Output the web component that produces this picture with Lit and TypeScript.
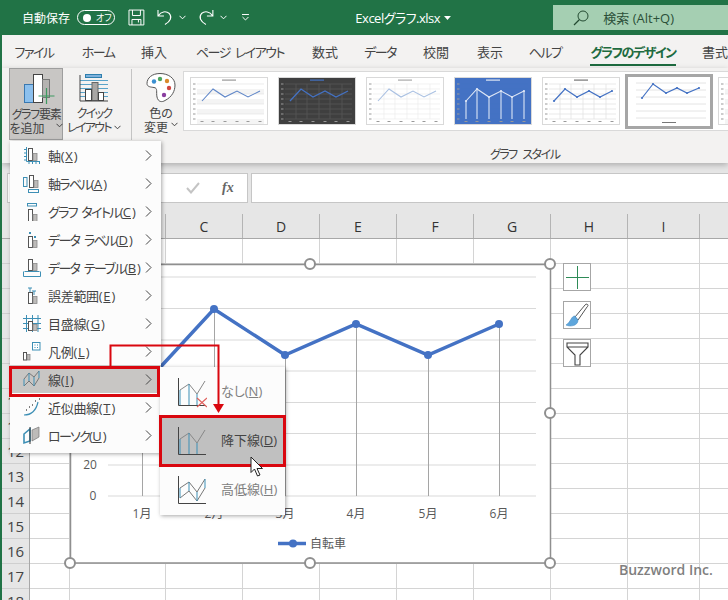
import { css, html, svg, LitElement } from 'lit'
import { customElement, property } from 'lit/decorators.js'

type Thumb = {
  bg: string
  line: string
  grid: string
  lineWidth: number
  vertical?: boolean
  drop?: boolean
  dots?: boolean
  band?: boolean
  title: string
}

const THUMBS: Thumb[] = [
  { bg: '#fff', line: '#5f86c8', grid: '#e4e4e4', lineWidth: 1.1, band: true, title: '#999' },
  { bg: '#3f3f3f', line: '#4472c4', grid: '#5a5a5a', lineWidth: 1.3, vertical: true, title: '#4472c4' },
  { bg: '#fff', line: '#a9c0e2', grid: '#ececec', lineWidth: 1.1, vertical: true, title: '#aaa' },
  { bg: '#4472c4', line: '#dfe7f5', grid: '#4472c4', lineWidth: 1.1, drop: true, dots: true, title: '#dfe7f5' },
  { bg: '#fff', line: '#4472c4', grid: '#e0e0e0', lineWidth: 1.2, vertical: true, dots: true, title: '#777' },
]

const THUMB_X = [12, 23, 35, 47, 58, 70]
const THUMB_Y = [24, 12, 20, 14, 20, 14]

@customElement('chart-thumb')
export class ChartThumb extends LitElement {
  @property({ type: Number })
  index = 0

  render() {
    const t = THUMBS[this.index]
    const pts = THUMB_X.map((x, i) => `${x},${THUMB_Y[i]}`).join(' ')
    const rows = [7, 12, 17, 22, 27, 32, 37, 42]
    return html`
      <svg width="78" height="48" viewBox="0 0 78 48">
        <rect x="0.5" y="0.5" width="77" height="47" fill=${t.bg} stroke="#d9d9d9" />
        <rect x="32" y="2.5" width="14" height="1.2" fill=${t.title} />
        ${rows.map((y) =>
          t.band && y % 2 === 0
            ? svg`<rect x="7" y=${y} width="67" height="5" fill="#f4f4f4" />`
            : svg`<line x1="7" x2="74" y1=${y} y2=${y} stroke=${t.grid} stroke-width="0.7" />`
        )}
        ${t.vertical
          ? [18, 29, 41, 52, 64].map(
              (x) =>
                svg`<line x1=${x} x2=${x} y1="7" y2="42" stroke=${t.grid} stroke-width="0.7" />`
            )
          : ''}
        ${t.drop
          ? THUMB_X.map(
              (x, i) =>
                svg`<line x1=${x} x2=${x} y1=${THUMB_Y[i]} y2="42" stroke="#cfdcf2" stroke-width="1.2" />`
            )
          : ''}
        <polyline points=${pts} fill="none" stroke=${t.line} stroke-width=${t.lineWidth} />
        ${t.dots
          ? THUMB_X.map(
              (x, i) => svg`<circle cx=${x} cy=${THUMB_Y[i]} r="1.1" fill=${t.line} />`
            )
          : ''}
        ${rows.map(
          (y) => svg`<rect x="3" y=${y - 0.5} width="2.5" height="1" fill="#999" />`
        )}
        ${THUMB_X.map((x) => svg`<rect x=${x - 1.5} y="44" width="3" height="1" fill="#999" />`)}
      </svg>
    `
  }

  static styles = css`
    :host {
      display: block;
      width: 78px;
      height: 48px;
    }
    svg {
      display: block;
    }
  `
}

const DARK = '#555'
const BLUE = '#3d8fb5'
const GREY = '#bdbbb9'

// two little bars that nearly every chart element icon shares
const bars = (x: number, y: number, h = 12) => svg`
  <rect x=${x + 0.5} y=${y + 0.5} width="4" height=${h} fill="#fff" stroke=${DARK} />
  <rect x=${x + 5} y=${y + h - 6.5} width="4" height="7" fill=${GREY} stroke="#8a8a8a" stroke-width="0.8" />
`

const ICONS = [
  // 軸
  svg`${bars(5, 2)}
    <path d="M3.5 1V15.5H17M1 3.5H3.5M1 7H3.5M1 10.5H3.5M1 14H3.5M6 15.5V18M9.5 15.5V18M13 15.5V18M16.5 15.5V18" fill="none" stroke=${BLUE} />`,
  // 軸ラベル
  svg`<rect x="0.5" y="3.5" width="3.5" height="9" fill="none" stroke=${BLUE} />
    ${bars(6, 1)}
    <rect x="5.5" y="15.5" width="10" height="3" fill="none" stroke=${BLUE} />`,
  // グラフ タイトル
  svg`<rect x="4.5" y="1.5" width="9" height="2.5" fill="none" stroke=${BLUE} />${bars(5, 7)}`,
  // データ ラベル
  svg`<rect x="6" y="2" width="2" height="2" fill=${BLUE} /><rect x="11" y="6" width="2" height="2" fill=${BLUE} />
    <rect x="5.5" y="6.5" width="4" height="11" fill="#fff" stroke=${DARK} />
    <rect x="10" y="10.5" width="4" height="7" fill=${GREY} stroke="#8a8a8a" stroke-width="0.8" />`,
  // データ テーブル
  svg`${bars(5, 1, 11)}
    <path d="M1.5 13.5H16.5M0.5 13.5V18.5H17.5V13.5M0.5 18.5" fill="none" stroke=${BLUE} />`,
  // 誤差範囲
  svg`<path d="M5 2H9M7 2V6M9 5H13M11 5V9" stroke=${BLUE} fill="none" />
    <rect x="5.5" y="6.5" width="4" height="11" fill="#fff" stroke=${DARK} />
    <rect x="10" y="10.5" width="4" height="7" fill=${GREY} stroke="#8a8a8a" stroke-width="0.8" />`,
  // 目盛線
  svg`<path d="M0 4.5H18M0 9.5H18M0 14.5H18M3.5 1V18M9.5 1V18M15 1V18" fill="none" stroke=${BLUE} />
    <rect x="5.5" y="7.5" width="4" height="9" fill="#fff" stroke=${DARK} />
    <rect x="10" y="10.5" width="4" height="6" fill=${GREY} stroke="#8a8a8a" stroke-width="0.8" />`,
  // 凡例
  svg`<rect x="9.5" y="0.5" width="7.5" height="7.5" fill="#fff" stroke=${BLUE} />
    <path d="M11.5 3H12.5M14 3H15M11.5 5.5H12.5M14 5.5H15" stroke=${BLUE} />
    <rect x="0.5" y="10.5" width="3" height="7.5" fill="#fff" stroke=${DARK} />
    <rect x="4" y="12.5" width="3" height="5.5" fill=${GREY} stroke="#8a8a8a" stroke-width="0.8" />`,
  // 線
  svg`<path d="M1 9L6 3L11 7L16 1M1 16L6 11L11 16L16 8" fill="none" stroke="#777" />
    <path d="M1 9V16M6 3V11M11 7V16M16 1V8" fill="none" stroke=${BLUE} />`,
  // 近似曲線
  svg`<path d="M1 17C8 17 13 13 15 4" fill="none" stroke=${BLUE} stroke-width="1.2" />
    <path d="M3 12H4M6 9H7M9 7H10M12 3H13M16 1H17" stroke="#555" stroke-width="1.6" />`,
  // ローソク
  svg`<path d="M1 8L7 3V15L1 17Z" fill="none" stroke=${BLUE} stroke-width="1.6" />
    <path d="M9 4L16 1V11L9 15Z" fill=${GREY} stroke="#777" stroke-width="0.7" />
    <path d="M7 1V18" stroke="#333" />`,
]

const LINE_TOP = 'M3 12L12 6L20 16L28 3'
const LINE_LOW = 'M3 22L12 15L20 25L28 12'

const subIcon = (body: unknown) => html`
  <svg class="sub-icon" width="30" height="30" viewBox="0 0 30 30">
    <path d="M1.5 0V27.5H29" fill="none" stroke="#444" />
    ${body}
  </svg>
`

const MENU = [
  ['軸(', 'X', ')'],
  ['軸ラベル(', 'A', ')'],
  ['グラフ タイトル(', 'C', ')'],
  ['データ ラベル(', 'D', ')'],
  ['データ テーブル(', 'B', ')'],
  ['誤差範囲(', 'E', ')'],
  ['目盛線(', 'G', ')'],
  ['凡例(', 'L', ')'],
  ['線(', 'I', ')'],
  ['近似曲線(', 'T', ')'],
  ['ローソク(', 'U', ')'],
]

const TABS = [
  ['ファイル', 64],
  ['ホーム', 64],
  ['挿入', 48],
  ['ページ レイアウト', 124],
  ['数式', 46],
  ['データ', 64],
  ['校閲', 48],
  ['表示', 60],
  ['ヘルプ', 50],
  ['グラフのデザイン', 126],
  ['書式', 38],
] as const

const COLS = [
  ['A', 40],
  ['B', 96],
  ['C', 77],
  ['D', 77],
  ['E', 77],
  ['F', 77],
  ['G', 77],
  ['H', 77],
  ['I', 72],
  ['', 29],
] as const

const ROWS = Array.from({ length: 15 }, (_, i) => i + 4)

const GRID_Y = [277, 308.5, 340, 371, 402.5, 433.5, 465, 496]
const PX = [142, 214, 285, 356, 428, 499]
const PY = [387, 309, 355, 324, 355, 324]
const HANDLES = [
  [70, 264],
  [310, 264],
  [550, 264],
  [550, 413],
  [70, 563],
  [310, 563],
  [550, 563],
]

const hasKana = (s: string) => /[\u30a0-\u30ff]/.test(s)

const chevron = html`<svg class="chev" width="7" height="5" viewBox="0 0 7 5">
  <path d="M0.5 0.8L3.5 3.8L6.5 0.8" fill="none" stroke="currentColor" />
</svg>`

@customElement('app-root')
export class AppRoot extends LitElement {
  renderTitleBar() {
    return html`
      <div class="title">
        <span class="autosave">自動保存</span>
        <span class="toggle"><i></i><b>オフ</b></span>
        <svg class="save" width="17" height="17" viewBox="0 0 17 17">
          <path
            d="M1 1H16V16H1ZM4.5 1V6.5H12.5V1M4 16V10.5H13V16M10.5 10.5V13.5"
            fill="none"
            stroke="#fff"
          />
        </svg>
        <svg class="undo" width="16" height="17" viewBox="0 0 16 17">
          <path
            d="M1 1V7H7M1.5 6.5C4 2.5 9 1.5 12.5 4.5C15.5 8 13.5 12.5 8 15.5"
            fill="none"
            stroke="#fff"
            stroke-width="1.1"
          />
        </svg>
        <span class="qat-chev">${chevron}</span>
        <svg class="redo" width="16" height="17" viewBox="0 0 16 17">
          <path
            d="M15 1V7H9M14.5 6.5C12 2.5 7 1.5 3.5 4.5C0.5 8 2.5 12.5 8 15.5"
            fill="none"
            stroke="#fff"
            stroke-width="1.1"
          />
        </svg>
        <span class="qat-chev">${chevron}</span>
        <svg class="custom" width="7" height="7" viewBox="0 0 7 7">
          <path d="M0 0.5H7M0.5 3L3.5 6L6.5 3" fill="none" stroke="#fff" />
        </svg>
        <span class="filename">Excelグラフ.xlsx</span>
        <svg class="caret" width="7" height="4" viewBox="0 0 7 4">
          <path d="M0 0H7L3.5 4Z" fill="#fff" />
        </svg>
        <div class="search">
          <svg width="16" height="16" viewBox="0 0 16 16">
            <circle cx="10" cy="6" r="5" fill="none" stroke="#234a31" />
            <path d="M6.5 9.5L1 15" stroke="#234a31" stroke-width="1.2" />
          </svg>
          <span>検索 (Alt+Q)</span>
        </div>
      </div>
    `
  }

  renderTabs() {
    return html`
      <div class="tabs">
        ${TABS.map(([name, w], i) => {
          const cls = `tab${i === 9 ? ' active' : ''}${hasKana(name) ? ' kana' : ''}`
          return html`<span class=${cls} style="width:${w}px">${name}</span>`
        })}
      </div>
    `
  }

  renderRibbon() {
    return html`
      <div class="ribbon">
        <div class="big pressed">
          <svg width="32" height="32" viewBox="0 0 32 32">
            <rect x="0.5" y="11.5" width="9" height="18" fill="#8cc0ee" stroke="#3a78b0" />
            <rect x="9.5" y="1.5" width="9" height="28" fill="#fff" stroke="#444" />
            <rect x="18.5" y="6.5" width="7" height="18" fill="#b5b3b1" stroke="#777" />
            <path d="M22.5 15V31M14.5 23H30.5" stroke="#3d9a60" stroke-width="1.2" />
          </svg>
          <span class="tight">グラフ要素</span>
          <span>を追加 ${chevron}</span>
        </div>
        <div class="big quick">
          <svg width="30" height="30" viewBox="0 0 30 30">
            <rect x="6.5" y="1.5" width="16" height="3" fill="#7fb2dc" stroke="#2e7fae" />
            <path d="M1 7.5H29M1 11.5H29M1 15.5H29M1 19.5H29M1 23.5H29" stroke="#5aa3c9" />
            <rect x="13" y="9.5" width="6" height="18" fill="#a8a6a4" stroke="#666" />
            <rect x="6.5" y="16.5" width="6" height="11" fill="#fff" stroke="#444" />
            <rect x="19.5" y="19.5" width="5" height="8" fill="#fff" stroke="#444" />
            <path d="M1 2V28H29" fill="none" stroke="#444" />
          </svg>
          <span class="tighter">クイック</span>
          <span><span class="tighter">レイアウト</span> ${chevron}</span>
        </div>
        <div class="vsep"></div>
        <div class="big colors">
          <svg width="30" height="32" viewBox="0 0 30 32">
            <path
              d="M14 1.5C6 1.5 1 6 1 11.5C1 15 5 15 8 15.5C12 16 10 20 11 25C12 30 16 30.5 19 28.5C26 25 29 19 29 13C29 6 22 1.5 14 1.5Z"
              fill="#fff"
              stroke="#555"
            />
            <circle cx="8" cy="9.5" r="2.2" fill="#3a8fd0" />
            <circle cx="14" cy="7" r="2.2" fill="#4ba55d" />
            <circle cx="21" cy="9" r="2.2" fill="#d98a2b" />
            <circle cx="23" cy="16" r="2.2" fill="#d0453f" />
            <circle cx="18" cy="23" r="2.2" fill="#8a3fa0" />
          </svg>
          <span>色の</span>
          <span>変更 ${chevron}</span>
        </div>
        <div class="gallery-wrap">
          <div class="gallery">
            ${THUMBS.map((_, i) => html`<chart-thumb .index=${i}></chart-thumb>`)}
            <div class="picked">
              <svg width="82" height="49" viewBox="0 0 82 49">
                ${[6, 13, 20, 27, 34, 41].map(
                  (y) => svg`<line x1="8" x2="78" y1=${y} y2=${y} stroke="#ddd" stroke-width="0.8" />`
                )}
                <polyline
                  points="14,21 25,7 38,16 49,11 59,16 71,11"
                  fill="none"
                  stroke="#4472c4"
                  stroke-width="1.2"
                />
                ${[
                  [14, 21],
                  [25, 7],
                  [38, 16],
                  [49, 11],
                  [59, 16],
                  [71, 11],
                ].map(([x, y]) => svg`<circle cx=${x} cy=${y} r="1.1" fill="#4472c4" />`)}
                <rect x="34" y="45" width="14" height="1" fill="#777" />
              </svg>
            </div>
            <chart-thumb class="cut" .index=${0}></chart-thumb>
          </div>
          <div class="group-label">グラフ スタイル</div>
        </div>
      </div>
    `
  }

  renderFormula() {
    return html`
      <div class="formula">
        <div class="fbox name"></div>
        <div class="fbox funcs">
          <svg width="14" height="12" viewBox="0 0 14 12">
            <path d="M1 6L5 10.5L13 1" fill="none" stroke="#c4c4c4" stroke-width="2" />
          </svg>
          <span class="fx">fx</span>
        </div>
        <div class="fbox input"></div>
      </div>
    `
  }

  renderSheet() {
    return html`
      <div class="sheet">
        <div class="corner"></div>
        <div class="colheads">
          ${COLS.map(
            ([name, w]) => html`<div class="colhead" style="width:${w}px">${name}</div>`
          )}
        </div>
        <div class="rowheads">
          ${ROWS.map((n) => html`<div class="rowhead">${n}</div>`)}
        </div>
        <div class="cells">
          ${ROWS.map(
            () => html`<div class="row">
              ${COLS.map(([, w]) => html`<div class="cell" style="width:${w}px"></div>`)}
            </div>`
          )}
        </div>
      </div>
    `
  }

  renderChart() {
    const pts = PX.map((x, i) => `${x},${PY[i]}`).join(' ')
    const months = ['1月', '2月', '3月', '4月', '5月', '6月']
    return html`
      <svg class="chart" width="500" height="320" viewBox="60 254 500 320">
        <rect x="70.5" y="264.5" width="480" height="298.5" fill="#fff" stroke="#8f8f8f" stroke-width="1.5" />
        ${GRID_Y.map(
          (y) => svg`<line x1="108" x2="536" y1=${y} y2=${y} stroke="#d9d9d9" />`
        )}
        ${PX.map(
          (x, i) =>
            svg`<line x1=${x + 0.5} x2=${x + 0.5} y1=${PY[i]} y2="496" stroke="#a5a5a5" />`
        )}
        <polyline points=${pts} fill="none" stroke="#4472c4" stroke-width="3.5" />
        ${PX.map((x, i) => svg`<circle cx=${x} cy=${PY[i]} r="4" fill="#4472c4" />`)}
        <text class="axis" x="90" y="469" text-anchor="middle">20</text>
        <text class="axis" x="93" y="500" text-anchor="middle">0</text>
        ${months.map(
          (m, i) => svg`<text class="axis" x=${PX[i]} y="518" text-anchor="middle">${m}</text>`
        )}
        <line x1="278" x2="306" y1="543.5" y2="543.5" stroke="#4472c4" stroke-width="3.5" />
        <circle cx="293" cy="543.5" r="4" fill="#4472c4" />
        <text class="axis" x="310" y="548">自転車</text>
        ${HANDLES.map(
          ([x, y]) =>
            svg`<circle cx=${x} cy=${y} r="5" fill="#fff" stroke="#8f8f8f" stroke-width="2" />`
        )}
      </svg>
    `
  }

  renderSideButtons() {
    return html`
      <div class="side">
        <div class="side-btn">
          <svg width="24" height="24" viewBox="0 0 24 24">
            <path d="M12.5 1V24M1 12.5H24" stroke="#2e8b57" />
          </svg>
        </div>
        <div class="side-btn">
          <svg width="26" height="26" viewBox="0 0 26 26">
            <path d="M11 15L21 3C22 1.5 24 2 24 3.5C24 4 23.5 4.5 23 5L14 18Z" fill="#fff" stroke="#555" />
            <path
              d="M11 14C7 14 7 20 2 23C6 25 14 24 14 18Z"
              fill="#5ea6dc"
              stroke="#4a8fc4"
              stroke-width="0.6"
            />
          </svg>
        </div>
        <div class="side-btn">
          <svg width="24" height="26" viewBox="0 0 24 26">
            <path d="M2 3H23V7L15 15V25H10V15L2 7ZM2 7H23" fill="#fff" stroke="#444" stroke-width="1.1" />
          </svg>
        </div>
      </div>
    `
  }

  renderMenu() {
    return html`
      <div class="menu">
        ${MENU.map(
          ([a, k, b], i) => html`
            <div class=${i === 8 ? 'item hot' : 'item'}>
              <svg class="icon" width="18" height="19" viewBox="0 0 18 19">${ICONS[i]}</svg>
              <span class=${hasKana(a) ? 'label kana' : 'label'}>${a}<u>${k}</u>${b}</span>
              <svg class="more" width="7" height="11" viewBox="0 0 7 11">
                <path d="M1 0.5L6 5.5L1 10.5" fill="none" stroke="#444" />
              </svg>
            </div>
          `
        )}
      </div>
    `
  }

  renderSubmenu() {
    return html`
      <div class="submenu">
        <div class="sub">
          ${subIcon(svg`
            <path d=${LINE_TOP} fill="none" stroke="#888" />
            <path d="M3 12V27M12 6V27M20 16V27" stroke=${BLUE} />
            <path d="M20 20L30 29M30 20L20 29" stroke="#e0605c" stroke-width="1.2" />
          `)}
          <span class="sub-label dim">なし(<u>N</u>)</span>
        </div>
        <div class="sub hot">
          ${subIcon(svg`
            <path d=${LINE_TOP} fill="none" stroke="#888" />
            <path d="M3 12V27M12 6V27M20 16V27" stroke=${BLUE} />
          `)}
          <span class="sub-label">降下線(<u>D</u>)</span>
        </div>
        <div class="sub">
          ${subIcon(svg`
            <path d=${LINE_TOP} fill="none" stroke="#777" />
            <path d=${LINE_LOW} fill="none" stroke="#777" />
            <path d="M3 12V22M12 6V15M20 16V25M28 3V12" stroke=${BLUE} />
          `)}
          <span class="sub-label dim">高低線(<u>H</u>)</span>
        </div>
      </div>
    `
  }

  renderMarks() {
    return html`
      <div class="mark-rect line-row"></div>
      <div class="mark-rect drop-row"></div>
      <svg class="arrow" width="130" height="80" viewBox="100 340 130 80">
        <path d="M110.5 366V345.5H218.5V405" fill="none" stroke="#d9070f" stroke-width="2" />
        <path d="M213 404H224L218.5 413Z" fill="#d9070f" />
      </svg>
      <svg class="cursor" width="14" height="22" viewBox="0 0 14 22">
        <path
          d="M1 1V16.5L4.5 13L7.5 20L10 19L7 12.5H12.5Z"
          fill="#fff"
          stroke="#222"
          stroke-linejoin="round"
        />
      </svg>
      <div class="watermark">Buzzword Inc.</div>
    `
  }

  render() {
    return html`
      ${this.renderTitleBar()} ${this.renderTabs()} ${this.renderRibbon()} ${this.renderFormula()}
      ${this.renderSheet()} ${this.renderChart()} ${this.renderSideButtons()} ${this.renderMenu()}
      ${this.renderSubmenu()} ${this.renderMarks()}
    `
  }

  static styles = css`
    :host {
      display: block;
      position: relative;
      width: 728px;
      height: 600px;
      overflow: hidden;
      background: #fff;
      font-family: 'Open Sans', 'Noto Sans CJK JP', sans-serif;
      font-feature-settings: 'palt';
      color: #444;
      border-left: 2px solid #217346;
      box-sizing: border-box;
    }
    .title {
      display: flex;
      align-items: center;
      height: 35px;
      background: #217346;
      margin-left: -2px;
      color: #fff;
      font-size: 13px;
    }
    .autosave {
      flex: none;
      margin-left: 22px;
      width: 50px;
      font-size: 12px;
      white-space: nowrap;
    }
    .toggle {
      flex: none;
      display: flex;
      align-items: center;
      box-sizing: border-box;
      width: 38px;
      height: 15px;
      margin-left: 5px;
      border: 1px solid #fff;
      border-radius: 8px;
      padding-left: 5px;
    }
    .toggle i {
      width: 8px;
      height: 8px;
      border-radius: 50%;
      background: #fff;
    }
    .toggle b {
      font-size: 9px;
      font-weight: 400;
      margin-left: 5px;
    }
    .save {
      margin-left: 13px;
    }
    .undo {
      margin-left: 12px;
    }
    .redo {
      margin-left: 9px;
    }
    .qat-chev {
      display: flex;
      margin-left: 6px;
      width: 10px;
    }
    .custom {
      margin-left: 13px;
    }
    .filename {
      flex: none;
      margin-left: 106px;
      width: 86px;
      white-space: nowrap;
      font-size: 13px;
      letter-spacing: -0.5px;
    }
    .caret {
      margin-left: 3px;
    }
    .search {
      display: flex;
      align-items: center;
      box-sizing: border-box;
      width: 176px;
      height: 25px;
      margin-left: 102px;
      padding-left: 20px;
      background: #a5cfb2;
      color: #2b4f38;
      font-size: 13px;
      white-space: nowrap;
    }
    .search span {
      margin-left: 14px;
    }
    .tabs {
      display: flex;
      align-items: center;
      height: 33px;
      background: #f3f2f1;
      white-space: nowrap;
      overflow: hidden;
    }
    .tab {
      flex: none;
      text-align: center;
      font-size: 13px;
      position: relative;
    }
    .tab.kana {
      letter-spacing: -1.5px;
      word-spacing: 3px;
    }
    .tab.active {
      color: #1e6b3f;
      font-weight: 700;
    }
    .tab.active::after {
      content: '';
      position: absolute;
      left: 20px;
      right: 20px;
      bottom: -5px;
      height: 2px;
      background: #1e6b3f;
    }
    .ribbon {
      position: relative;
      display: flex;
      height: 95px;
      background: #f3f2f1;
      box-shadow: 0 2px 6px rgba(0, 0, 0, 0.25);
    }
    .big {
      display: flex;
      flex-direction: column;
      align-items: center;
      box-sizing: border-box;
      height: 72px;
      font-size: 12px;
      line-height: 14px;
      white-space: nowrap;
    }
    .big svg:first-child {
      margin-bottom: 3px;
    }
    .tight {
      letter-spacing: -1.3px;
    }
    .tighter {
      letter-spacing: -1.7px;
    }
    .chev {
      vertical-align: 2px;
    }
    .pressed {
      width: 54px;
      margin-left: 7px;
      padding-top: 4px;
      background: #c8c6c4;
      border: 1px solid #9e9e9e;
    }
    .pressed svg:first-child {
      margin-left: 8px;
    }
    .quick {
      width: 62px;
      padding-top: 5px;
    }
    .quick svg:first-child {
      margin-bottom: 4px;
    }
    .vsep {
      flex: none;
      width: 1px;
      height: 71px;
      margin: 1px 0 0 6px;
      background: #c4c4c4;
    }
    .colors {
      flex: none;
      width: 44px;
      margin-left: 7px;
      padding-top: 4px;
    }
    .gallery-wrap {
      flex: none;
      width: 545px;
    }
    .gallery {
      display: flex;
      align-items: center;
      gap: 10px;
      box-sizing: border-box;
      height: 60px;
      margin-top: 3px;
      padding-left: 6px;
      background: #fff;
      border: 1px solid #d9d9d9;
      border-right: none;
      overflow: hidden;
    }
    .picked {
      flex: none;
      box-sizing: border-box;
      width: 88px;
      height: 55px;
      margin-left: -5px;
      border: 3px solid #a6a6a6;
      background: #fff;
    }
    .picked svg {
      display: block;
    }
    .cut {
      flex: none;
      margin-left: -5px;
    }
    chart-thumb {
      flex: none;
    }
    .group-label {
      margin-top: 16px;
      padding-left: 307px;
      font-size: 12px;
      line-height: 16px;
      letter-spacing: -1.5px;
      word-spacing: 4px;
      white-space: nowrap;
    }
    .formula {
      display: flex;
      gap: 3px;
      height: 40px;
      box-sizing: border-box;
      padding: 10px 0 0 5px;
      background: #e6e6e6;
    }
    .fbox {
      box-sizing: border-box;
      height: 30px;
      background: #fff;
      border: 1px solid #c6c6c6;
    }
    .name {
      width: 128px;
    }
    .funcs {
      display: flex;
      align-items: center;
      width: 110px;
      padding-left: 47px;
    }
    .fx {
      margin-left: 22px;
      font-family: 'Liberation Serif', serif;
      font-style: italic;
      font-weight: 700;
      font-size: 14px;
      color: #666;
    }
    .input {
      flex: 1;
      border-right: none;
    }
    .sheet {
      display: grid;
      grid-template-columns: 28px 1fr;
      grid-template-rows: 36px auto;
      background: #fff;
    }
    .corner {
      background: #e6e6e6;
      border-bottom: 1px solid #a8a8a8;
    }
    .colheads {
      display: flex;
      background: #e6e6e6;
      border-bottom: 1px solid #a8a8a8;
    }
    .colhead {
      flex: none;
      box-sizing: border-box;
      display: flex;
      align-items: center;
      justify-content: center;
      height: 24px;
      margin-top: 11px;
      border-right: 1px solid #b4b4b4;
      font-size: 14px;
      color: #333;
    }
    .rowheads {
      background: #e6e6e6;
      border-right: 1px solid #a8a8a8;
    }
    .rowhead {
      box-sizing: border-box;
      height: 25px;
      border-bottom: 1px solid #cfcfcf;
      text-align: center;
      font-size: 15px;
      line-height: 24px;
      color: #444;
    }
    .row {
      display: flex;
      height: 25px;
    }
    .cell {
      flex: none;
      box-sizing: border-box;
      border-right: 1px solid #d4d4d4;
      border-bottom: 1px solid #d4d4d4;
    }
    .chart {
      position: absolute;
      left: 58px;
      top: 254px;
    }
    .axis {
      font-size: 12px;
      fill: #595959;
      font-family: 'Open Sans', 'Noto Sans CJK JP', sans-serif;
    }
    .side {
      position: absolute;
      left: 561px;
      top: 263px;
      display: flex;
      flex-direction: column;
      gap: 10px;
    }
    .side-btn {
      display: flex;
      align-items: center;
      justify-content: center;
      box-sizing: border-box;
      width: 28px;
      height: 28px;
      background: #fff;
      border: 1px solid #a6a6a6;
    }
    .menu {
      position: absolute;
      left: 8px;
      top: 141px;
      box-sizing: border-box;
      width: 151px;
      height: 312px;
      background: #fcfcfc;
      box-shadow: 1px 1px 4px rgba(0, 0, 0, 0.35);
    }
    .item {
      display: flex;
      align-items: center;
      height: 28px;
      padding-left: 13px;
      font-size: 13px;
      color: #444;
      white-space: nowrap;
      letter-spacing: -0.3px;
    }
    .item.hot {
      background: #c8c6c4;
    }
    .icon {
      flex: none;
    }
    .label {
      flex: 1;
      margin-left: 7px;
    }
    .label.kana {
      letter-spacing: -1.7px;
      word-spacing: 3px;
    }
    .label u {
      letter-spacing: 0;
      margin: 0 1px;
    }
    .more {
      flex: none;
      margin-right: 9px;
    }
    .submenu {
      position: absolute;
      left: 158px;
      top: 367px;
      box-sizing: border-box;
      width: 125px;
      height: 148px;
      background: #fcfcfc;
      box-shadow: 1px 1px 4px rgba(0, 0, 0, 0.35);
    }
    .sub {
      display: flex;
      align-items: center;
      height: 49px;
      padding-left: 17px;
      font-size: 13px;
      white-space: nowrap;
    }
    .sub.hot {
      background: #c0c0c0;
    }
    .sub-icon {
      flex: none;
      margin-top: 2px;
    }
    .sub-label {
      margin-left: 14px;
      margin-top: -2px;
    }
    .dim {
      color: #808080;
    }
    .mark-rect {
      position: absolute;
      box-sizing: border-box;
      border: 3px solid #d9070f;
    }
    .line-row {
      left: 7px;
      top: 366px;
      width: 151px;
      height: 31px;
    }
    .drop-row {
      left: 157px;
      top: 415px;
      width: 127px;
      height: 52px;
    }
    .arrow {
      position: absolute;
      left: 98px;
      top: 340px;
    }
    .cursor {
      position: absolute;
      left: 248px;
      top: 456px;
    }
    .watermark {
      position: absolute;
      left: 617px;
      top: 559px;
      font-family: 'Open Sans', sans-serif;
      font-weight: 600;
      font-size: 14px;
      line-height: 22px;
      color: #7f7f7f;
    }
  `
}
